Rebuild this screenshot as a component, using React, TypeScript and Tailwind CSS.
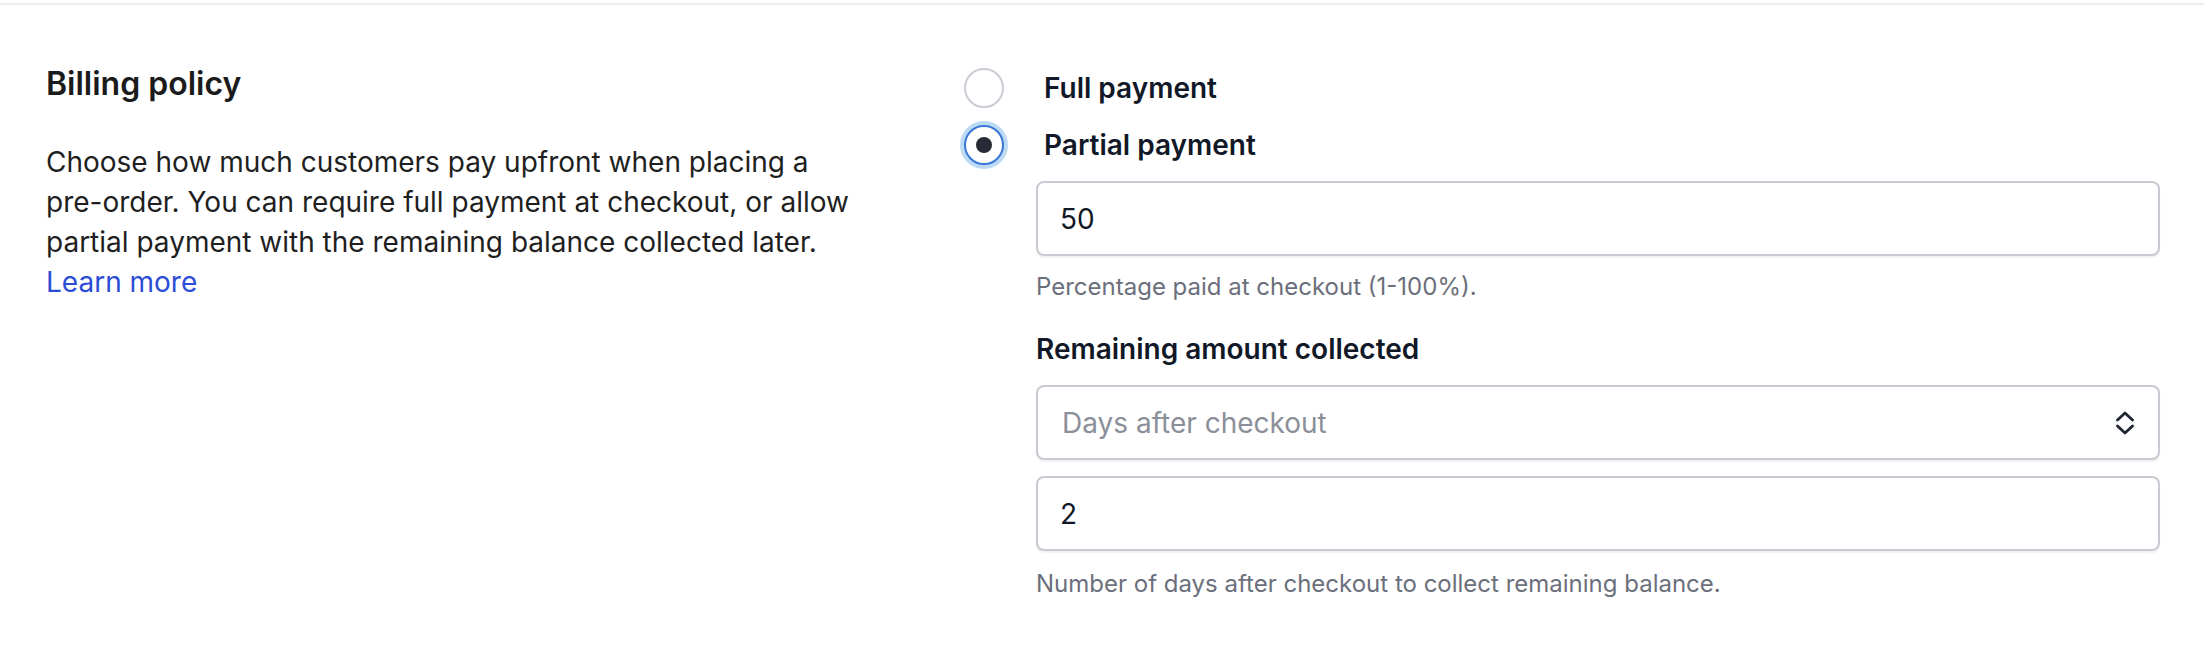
import { useState } from 'react';

const options = [
  { id: 'full', label: 'Full payment' },
  { id: 'partial', label: 'Partial payment' },
];

function Radio({ checked }: { checked: boolean }) {
  if (checked) {
    return (
      <span className="flex h-[40px] w-[40px] shrink-0 items-center justify-center rounded-full border-2 border-[#3a78d6] bg-white ring-4 ring-[#bcdaf4]">
        <span className="h-[16px] w-[16px] rounded-full bg-[#272b37]" />
      </span>
    );
  }
  return <span className="h-[40px] w-[40px] shrink-0 rounded-full border-2 border-[#c9ccd3] bg-white" />;
}

export default function App() {
  const [mode, setMode] = useState('partial');
  const [percent, setPercent] = useState('50');
  const [days, setDays] = useState('2');

  return (
    <div className="min-h-screen bg-white pt-[3px] font-['Inter','Liberation_Sans',sans-serif]">
      <section className="flex border-t-2 border-[#e9eef2] px-[44px] pl-[46px] pt-[55px] pb-[60px]">
        {/* Description */}
        <div className="w-[918px] shrink-0">
          <h2 className="text-[32px] font-semibold leading-[48px] text-[#1b1b1b]">Billing policy</h2>
          <p className="mt-[34px] w-[812px] text-[28px] leading-[40px] text-[#1f1f1f]">
            Choose how much customers pay upfront when placing a pre-order. You can require full payment at
            checkout, or allow partial payment with the remaining balance collected later.{' '}
            <a href="#" className="text-[#2b4dd6]">
              Learn more
            </a>
          </p>
        </div>

        {/* Options */}
        <div className="flex-1 pt-[8px]">
          <div className="flex flex-col gap-[17px]">
            {options.map((opt) => (
              <button
                key={opt.id}
                type="button"
                onClick={() => setMode(opt.id)}
                className="flex items-center gap-[40px] text-left"
              >
                <Radio checked={mode === opt.id} />
                <span className="text-[28px] font-semibold leading-[40px] text-[#111827]">{opt.label}</span>
              </button>
            ))}
          </div>

          {mode === 'partial' && (
            <div className="ml-[72px] mt-[16px]">
              <input
                value={percent}
                onChange={(e) => setPercent(e.target.value)}
                className="h-[75px] w-full rounded-[8px] border-2 border-[#c7cad0] bg-white px-[22px] text-[28px] text-[#111827] shadow-[0_2px_2px_rgba(0,0,0,0.06)] outline-none"
              />
              <p className="mt-[15px] text-[24px] leading-[32px] text-[#6b6f7b]">Percentage paid at checkout (1-100%).</p>

              <h3 className="mt-[26px] text-[28px] font-semibold leading-[40px] text-[#111827]">
                Remaining amount collected
              </h3>
              <div className="mt-[16px] flex h-[75px] items-center justify-between rounded-[8px] border-2 border-[#c7cad0] bg-white pl-[24px] pr-[24px] shadow-[0_2px_2px_rgba(0,0,0,0.06)]">
                <span className="text-[28px] text-[#8b8f99]">Days after checkout</span>
                <svg width="18" height="24" viewBox="0 0 18 24" fill="none" className="text-[#1f2633]">
                  <path d="M1.5 9 9 2l7.5 7" stroke="currentColor" strokeWidth="2.8" strokeLinecap="round" strokeLinejoin="round" />
                  <path d="M1.5 15 9 22l7.5-7" stroke="currentColor" strokeWidth="2.8" strokeLinecap="round" strokeLinejoin="round" />
                </svg>
              </div>
              <input
                value={days}
                onChange={(e) => setDays(e.target.value)}
                className="mt-[16px] h-[75px] w-full rounded-[8px] border-2 border-[#c7cad0] bg-white px-[22px] text-[28px] text-[#111827] shadow-[0_2px_2px_rgba(0,0,0,0.06)] outline-none"
              />
              <p className="mt-[17px] text-[24px] leading-[32px] text-[#6b6f7b]">
                Number of days after checkout to collect remaining balance.
              </p>
            </div>
          )}
        </div>
      </section>
    </div>
  );
}
